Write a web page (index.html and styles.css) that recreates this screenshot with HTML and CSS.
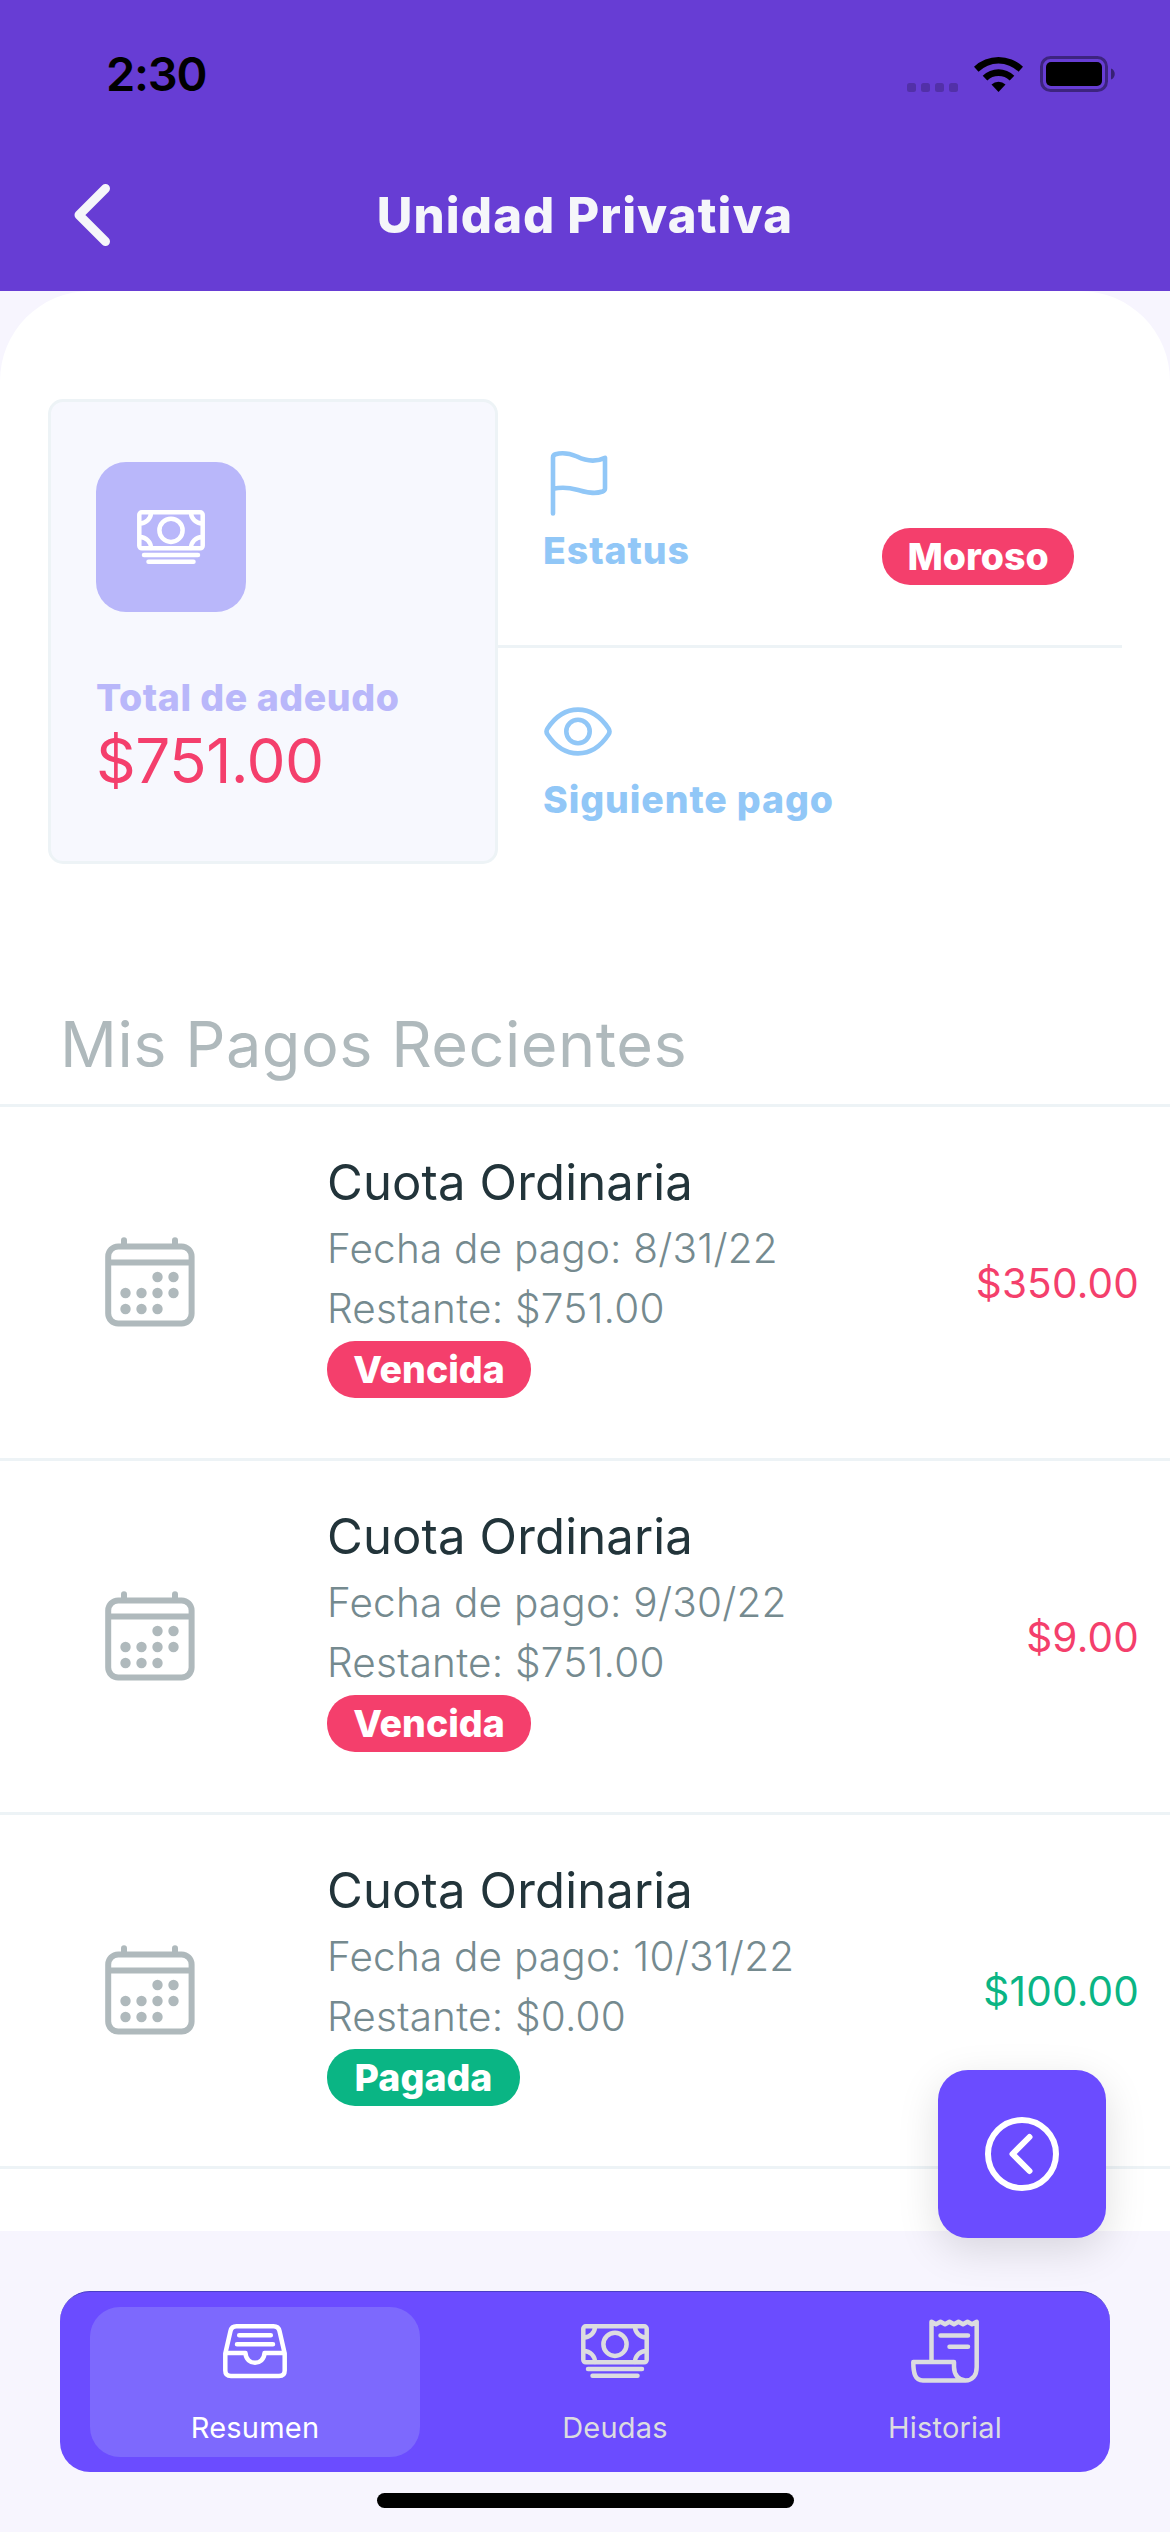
FILE: index.html
```html
<!DOCTYPE html>
<html lang="es">
<head>
<meta charset="utf-8">
<title>Unidad Privativa</title>
<link rel="stylesheet" href="styles.css">
</head>
<body>
<svg class="sprite" aria-hidden="true">
  <symbol id="cash" viewBox="0 0 68 54">
    <g fill="none" stroke="currentColor" stroke-width="4.5" stroke-linecap="round" stroke-linejoin="round">
      <rect x="2.3" y="2.3" width="63.4" height="36" rx="2.5"/>
      <circle cx="34" cy="20.3" r="11.6"/>
      <path d="M3 13.5A11 11 0 0 0 14 3M3 27A11 11 0 0 1 14 38M65 13.5A11 11 0 0 1 54 3M65 27A11 11 0 0 0 54 38"/>
      <path d="M7 45H61M11.500 51.700H56.500"/>
    </g>
  </symbol>
  <symbol id="calendar" viewBox="0 0 90 90">
    <g fill="none" stroke="currentColor" stroke-width="6">
      <rect x="3.200" y="9.500" width="83.400" height="77" rx="10"/>
      <path d="M3 25.500H87"/>
      <path d="M19 9V3.300M70 9V3.300" stroke-linecap="round"/>
    </g>
    <g fill="currentColor">
      <circle cx="52.500" cy="40" r="5.200"/><circle cx="68.500" cy="40" r="5.200"/>
      <circle cx="20.500" cy="56" r="5.200"/><circle cx="36.500" cy="56" r="5.200"/><circle cx="52.500" cy="56" r="5.200"/><circle cx="68.500" cy="56" r="5.200"/>
      <circle cx="20.500" cy="72" r="5.200"/><circle cx="36.500" cy="72" r="5.200"/><circle cx="52.500" cy="72" r="5.200"/>
    </g>
  </symbol>
</svg>

<div class="screen">
  <header class="header">
    <div class="status">
      <span class="time">2:30</span>
      <div class="status-icons">
        <svg class="dots" viewBox="0 0 51 9"><rect width="9" height="9" rx="2.500"/><rect x="14" width="9" height="9" rx="2.500"/><rect x="28" width="9" height="9" rx="2.500"/><rect x="42" width="9" height="9" rx="2.500"/></svg>
        <svg class="wifi" viewBox="0 0 49 36"><path d="M0 10.800A35.500 35.500 0 0 1 49 10.800L44.500 15.700A28.500 28.500 0 0 0 4.500 15.700Z"/><path d="M8.700 19.700A22.800 22.800 0 0 1 40.300 19.700L35.700 24.600A16.200 16.200 0 0 0 13.300 24.600Z"/><path d="M17.500 28.500A10.200 10.200 0 0 1 31.500 28.500L24.500 36Z"/></svg>
        <svg class="battery" viewBox="0 0 76 36"><rect x="1.500" y="1.500" width="65" height="33" rx="9" fill="none" stroke="#000" stroke-opacity=".4" stroke-width="3"/><rect x="6" y="6" width="56" height="24" rx="5"/><path d="M71 12.500C76 14 76 22 71 23.500Z" opacity=".45"/></svg>
      </div>
    </div>
    <div class="navbar">
      <svg class="back" viewBox="0 0 36 62"><path d="M31.500 4.500L5 31L31.500 57.500"/></svg>
      <h1 class="title">Unidad Privativa</h1>
    </div>
  </header>

  <main class="panel">
    <section class="summary">
      <div class="debt">
        <div class="tile"><svg class="cash"><use href="#cash"/></svg></div>
        <div class="debt-label">Total de adeudo</div>
        <div class="debt-total">$751.00</div>
      </div>
      <div class="facts">
        <div class="fact">
          <div>
            <svg class="fact-icon" viewBox="0 0 68 68"><path d="M9 64.500V8.500Q9 6 11.500 5.200C19 3 26 4.500 33 7.500C42 12 51 13.500 61 8.800V39.500Q61 41.500 58.500 42.500C49 46 40 42.500 33 40.700C24 38.300 17 38.200 9 39.800"/></svg>
            <div class="fact-label">Estatus</div>
          </div>
          <span class="badge late">Moroso</span>
        </div>
        <div class="fact next">
          <div>
            <svg class="fact-icon" viewBox="0 0 68 68"><path d="M3.500 30.500C12 17.500 22 11.600 34 11.600S56 17.500 64.500 30.500Q66.500 33.500 64.500 36.500C56 49.500 46 55.400 34 55.400S12 49.500 3.500 36.500Q1.500 33.500 3.500 30.500Z"/><circle cx="34" cy="33.500" r="11.700"/></svg>
            <div class="fact-label">Siguiente pago</div>
          </div>
        </div>
      </div>
    </section>

    <h2 class="heading">Mis Pagos Recientes</h2>
    <ul class="list">
      <li class="row">
        <svg class="calendar"><use href="#calendar"/></svg>
        <div class="info">
          <div class="name">Cuota Ordinaria</div>
          <div class="meta">Fecha de pago: 8/31/22</div>
          <div class="meta">Restante: $751.00</div>
          <span class="badge late">Vencida</span>
        </div>
        <div class="amount due">$350.00</div>
      </li>
      <li class="row">
        <svg class="calendar"><use href="#calendar"/></svg>
        <div class="info">
          <div class="name">Cuota Ordinaria</div>
          <div class="meta">Fecha de pago: 9/30/22</div>
          <div class="meta">Restante: $751.00</div>
          <span class="badge late">Vencida</span>
        </div>
        <div class="amount due">$9.00</div>
      </li>
      <li class="row">
        <svg class="calendar"><use href="#calendar"/></svg>
        <div class="info">
          <div class="name">Cuota Ordinaria</div>
          <div class="meta">Fecha de pago: 10/31/22</div>
          <div class="meta">Restante: $0.00</div>
          <span class="badge paid">Pagada</span>
        </div>
        <div class="amount settled">$100.00</div>
      </li>
    </ul>
  </main>

  <footer class="footer">
    <nav class="tabs">
      <a class="tab active">
        <svg class="tab-icon" viewBox="0 0 68 64"><path d="M4.300 34.500V51.500Q4.300 57 10 57H58Q63.700 57 63.700 51.500V34.500L58.500 12Q57.400 7.300 52.500 7.300H15.500Q10.600 7.300 9.500 12ZM4.300 34H24.500C25 47 43 47 43.500 34H63.700M18.200 16.200H49.800M16 25.300H52"/></svg>
        <span>Resumen</span>
      </a>
      <a class="tab">
        <svg class="tab-icon" viewBox="0 -5 68 64"><use href="#cash" width="68" height="54"/></svg>
        <span>Deudas</span>
      </a>
      <a class="tab">
        <svg class="tab-icon" viewBox="0 0 68 64"><path d="M20.500 43V2.800L25 5.300L29.500 2.800L34 5.300L38.500 2.800L43 5.300L47.500 2.800L52 5.300L56.500 2.800L61 5.300L65.700 2.800V48C65.700 57 61 61.500 54.500 61.500C48 61.500 43 56 43 48V43H2.300C2.300 54 4 61.500 12 61.500H54.500M29.500 16.500H57M38.500 27.700H57"/></svg>
        <span>Historial</span>
      </a>
    </nav>
    <div class="home"></div>
  </footer>
  <button class="fab"><svg viewBox="0 0 74 74"><circle cx="37" cy="37" r="34"/><path d="M44.500 20L27.500 37L44.500 54"/></svg></button>
</div>
</body>
</html>
```

FILE: styles.css
```css
* { box-sizing: border-box; }
body { margin: 0; background: #f7f5fe; font-family: Inter, Roboto, "Liberation Sans", sans-serif; }
h1, h2, ul { margin: 0; padding: 0; font-weight: 400; }
svg { display: block; flex: none; }
.sprite { position: absolute; width: 0; height: 0; }
.screen { position: relative; width: 1170px; height: 2532px; overflow: hidden; white-space: nowrap; display: flex; flex-direction: column; }

.header { height: 291px; background: #673dd4; flex: none; }
.status { height: 141px; padding: 44px 54px 0 106px; display: flex; justify-content: space-between; align-items: flex-start; }
.time { font-size: 47px; line-height: 60px; font-weight: 600; letter-spacing: -1.200px; }
.status-icons { display: flex; align-items: flex-end; padding-top: 12px; }
.dots { width: 51px; height: 9px; opacity: .2; margin-right: 16px; }
.wifi { width: 49px; height: 36px; margin-right: 17px; }
.battery { width: 76px; height: 36px; }
.navbar { height: 150px; display: grid; grid-template-columns: 300px 1fr 300px; align-items: center; }
.back { width: 36px; height: 62px; margin: -2px 0 0 74px; fill: none; stroke: #f5f6fa; stroke-width: 9; stroke-linecap: round; stroke-linejoin: round; }
.title { text-align: center; color: #f5f6fa; font-size: 49px; line-height: 60px; font-weight: 800; letter-spacing: 1.100px; }

.panel { height: 1940px; flex: none; background: #fff; border-radius: 90px 90px 0 0; padding-top: 108px; }
.summary { display: flex; padding: 0 48px; height: 465px; }
.debt { width: 450px; border: 3px solid #edf3f6; border-radius: 15px; background: #f7f8fe; padding: 60px 45px 0; }
.tile { width: 150px; height: 150px; border-radius: 30px; background: #b9b7fa; color: #fff; display: flex; align-items: center; justify-content: center; }
.cash { width: 68px; height: 54px; }
.debt-label { margin-top: 63px; font-size: 37.500px; line-height: 46px; font-weight: 800; color: #b9b7fa; letter-spacing: .550px; }
.debt-total { margin-top: 2px; font-size: 62px; line-height: 76px; color: #f43f6c; letter-spacing: -.6px; }
.facts { flex: 1; display: flex; flex-direction: column; }
.fact { height: 249px; flex: none; padding: 50px 48px 0 45px; border-bottom: 3px solid #edf3f6; display: flex; justify-content: space-between; align-items: flex-start; color: #91c7f7; }
.fact.next { border: 0; }
.fact-icon { width: 68px; height: 68px; fill: none; stroke: currentColor; stroke-width: 4.600; stroke-linecap: round; stroke-linejoin: round; margin: 0 0 11px 1px; }
.fact-label { font-size: 37.500px; line-height: 46px; font-weight: 800; letter-spacing: .9px; }
.badge { display: flex; align-items: center; justify-content: center; height: 57px; border-radius: 28px; color: #fff; font-size: 37.500px; font-weight: 800; }
.fact .badge { width: 192px; margin-top: 79px; }
.late { background: #f43f6c; }
.paid { background: #0ab584; }

.heading { margin-top: 140px; height: 100px; padding-left: 60px; font-size: 63px; line-height: 80px; color: #afb9bc; letter-spacing: .5px; }
.list { list-style: none; border-top: 3px solid #edf3f6; }
.row { height: 354px; display: grid; grid-template-columns: 327px 1fr auto; border-bottom: 3px solid #edf3f6; padding-right: 31px; }
.calendar { width: 90px; height: 90px; margin: 130px 0 0 105px; color: #afb9bc; }
.info { padding-top: 46px; }
.name { font-size: 49px; line-height: 60px; color: #22343a; letter-spacing: .150px; }
.meta { font-size: 40.500px; line-height: 60px; font-weight: 300; color: #758a8f; margin-top: 6px; letter-spacing: .2px; }
.meta + .meta { margin-top: 0; }
.info .badge { width: 204px; margin-top: 2px; }
.info .paid { width: 193px; }
.amount { padding-top: 151px; font-size: 40.500px; line-height: 52px; letter-spacing: .2px; }
.due { color: #f43f6c; }
.settled { color: #0ab584; }

.footer { height: 301px; padding: 60px 60px 0; display: flex; flex-direction: column; align-items: center; }
.tabs { width: 1050px; height: 181px; flex: none; background: #6b4cff; border-top: 1px solid #4a3fc4; border-radius: 30px; padding: 15px 0 15px 30px; display: grid; grid-template-columns: 360px 330px 330px; }
.tab { width: 330px; height: 150px; border-radius: 30px; display: flex; flex-direction: column; align-items: center; padding-top: 12px; color: #dcdce0; font-size: 29px; line-height: 36px; letter-spacing: .2px; }
.tab span { margin-top: 27px; }
.active { background: #7d69fd; color: #fff; }
.tab-icon { width: 68px; height: 64px; fill: none; stroke: currentColor; stroke-width: 4.500; stroke-linecap: round; stroke-linejoin: round; }
.home { width: 417px; height: 15px; border-radius: 8px; background: #000; margin-top: 21px; }
.fab { position: absolute; left: 938px; top: 2070px; width: 168px; height: 168px; border: 0; padding: 0; border-radius: 30px; background: #6b4cff; display: flex; align-items: center; justify-content: center; box-shadow: 0 12px 42px rgba(0,0,0,.13); }
.fab svg { width: 74px; height: 74px; fill: none; stroke: #fff; stroke-width: 6; stroke-linecap: round; stroke-linejoin: round; }
```
